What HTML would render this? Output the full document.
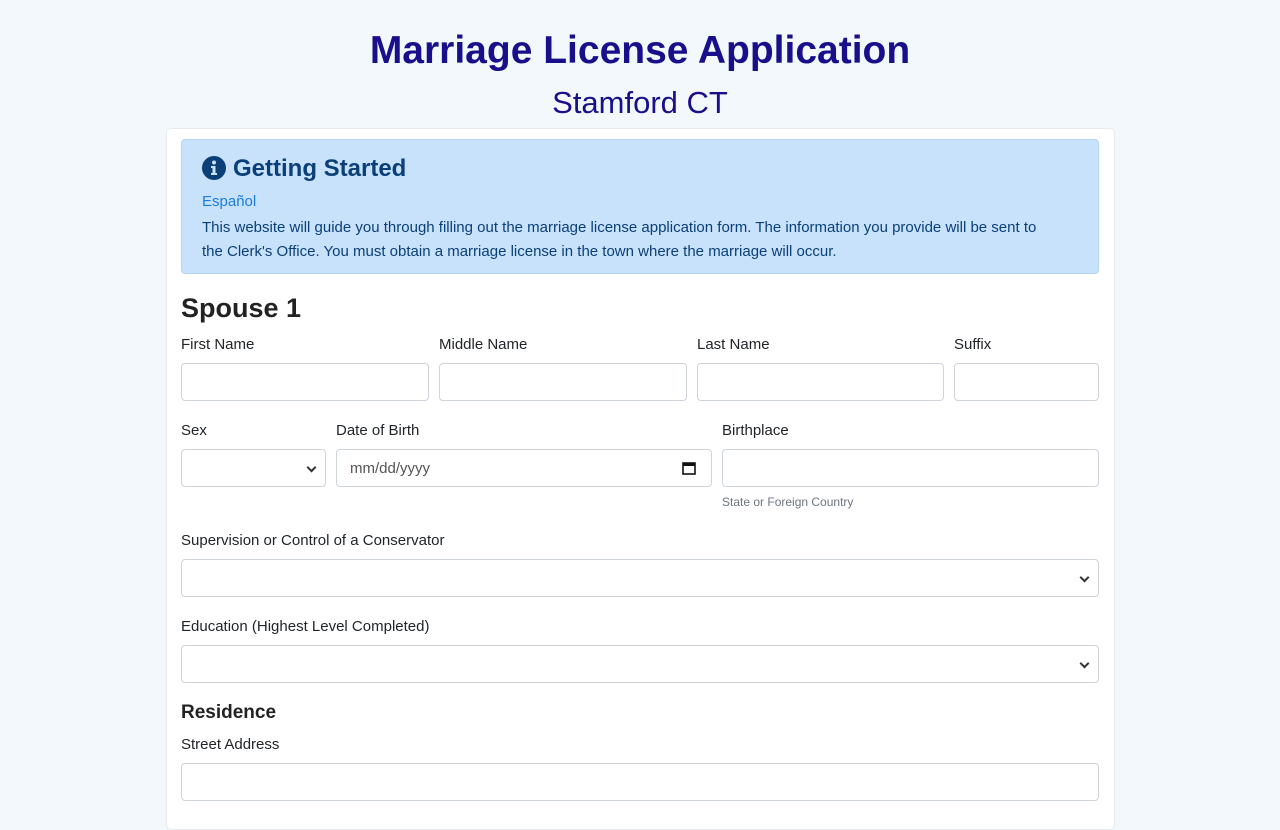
<!DOCTYPE html>
<html><head><meta charset="utf-8"><style>
body{margin:0;width:1280px;height:800px;overflow:hidden;background:#f3f8fd;font-family:"Liberation Sans",sans-serif;color:#212529;position:relative}
.a{position:absolute}
h1{position:absolute;margin:0;left:0;width:1280px;text-align:center;color:#1a0f8a;font-weight:bold}
.card{position:absolute;left:166px;top:128px;width:947px;height:700px;background:#fff;border:1px solid #e6eaee;border-radius:5px}
.alert{position:absolute;left:181px;top:139px;width:916px;height:133px;background:#c9e2fc;border:1px solid #b4d4f6;border-radius:4px;color:#0a3f77}
.lbl{position:absolute;font-size:15px;color:#212529}
.in{position:absolute;height:36px;border:1px solid #ced4da;border-radius:4px;background:#fff}
.chev{position:absolute;right:10px;top:14px;width:5px;height:5px;border-right:2px solid #333;border-bottom:2px solid #333;transform:rotate(45deg)}
</style></head><body>
<h1 style="top:29px;font-size:39px">Marriage License Application</h1>
<h1 style="top:85px;font-size:31px;font-weight:normal">Stamford CT</h1>
<div class="card"></div>
<div class="alert">
<svg class="a" style="left:20px;top:16px" width="24" height="24" viewBox="0 0 24 24"><circle cx="12" cy="12" r="12" fill="#0a3f77"/><circle cx="12" cy="6.5" r="2" fill="#c9e2fc"/><path d="M9 10h4.5v7H15v2H9v-2h1.5v-5H9z" fill="#c9e2fc"/></svg>
<div class="a" style="left:51px;top:15px;font-size:24px;font-weight:bold">Getting Started</div>
<div class="a" style="left:20px;top:53px;font-size:15px;color:#1a7de0">Español</div>
<div class="a" style="left:20px;top:76px;width:850px;font-size:15px;line-height:24px">This website will guide you through filling out the marriage license application form. The information you provide will be sent to the Clerk's Office. You must obtain a marriage license in the town where the marriage will occur.</div>
</div>
<div class="a" style="left:181px;top:293px;font-size:27px;font-weight:bold;color:#222">Spouse 1</div>
<div class="lbl" style="left:181px;top:336px">First Name</div>
<div class="lbl" style="left:439px;top:336px">Middle Name</div>
<div class="lbl" style="left:697px;top:336px">Last Name</div>
<div class="lbl" style="left:954px;top:336px">Suffix</div>
<div class="in" style="left:181px;top:363px;width:246px"></div>
<div class="in" style="left:439px;top:363px;width:246px"></div>
<div class="in" style="left:697px;top:363px;width:245px"></div>
<div class="in" style="left:954px;top:363px;width:143px"></div>
<div class="lbl" style="left:181px;top:422px">Sex</div>
<div class="lbl" style="left:336px;top:422px">Date of Birth</div>
<div class="lbl" style="left:722px;top:422px">Birthplace</div>
<div class="in" style="left:181px;top:449px;width:143px"><div class="chev"></div></div>
<div class="in" style="left:336px;top:449px;width:374px"><span class="a" style="left:13px;top:10px;font-size:15px;color:#555">mm/dd/yyyy</span><svg class="a" style="right:15px;top:11px" width="14" height="14" viewBox="0 0 14 14"><rect x="1" y="2" width="12" height="11" fill="none" stroke="#111" stroke-width="1.6"/><rect x="1" y="2" width="12" height="3" fill="#111"/></svg></div>
<div class="in" style="left:722px;top:449px;width:375px"></div>
<div class="a" style="left:722px;top:495px;font-size:12px;color:#6c757d">State or Foreign Country</div>
<div class="lbl" style="left:181px;top:532px">Supervision or Control of a Conservator</div>
<div class="in" style="left:181px;top:559px;width:916px"><div class="chev"></div></div>
<div class="lbl" style="left:181px;top:618px">Education (Highest Level Completed)</div>
<div class="in" style="left:181px;top:645px;width:916px"><div class="chev"></div></div>
<div class="a" style="left:181px;top:702px;font-size:19px;font-weight:bold;color:#222">Residence</div>
<div class="lbl" style="left:181px;top:736px">Street Address</div>
<div class="in" style="left:181px;top:763px;width:916px"></div>
</body></html>
